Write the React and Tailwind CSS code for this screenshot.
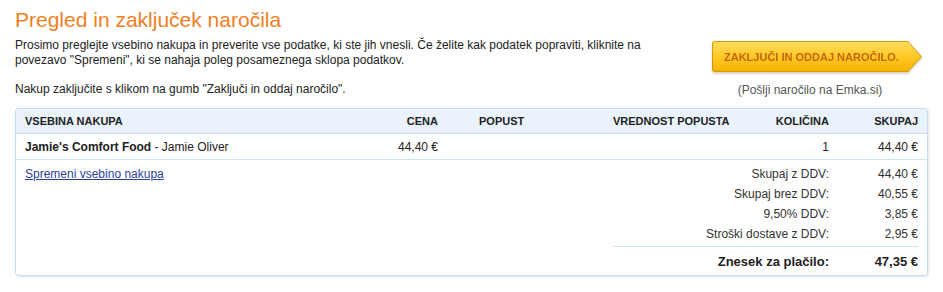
import React from "react";

const font = { fontFamily: '"Liberation Sans", Arial, sans-serif' };

const summary = [
  { label: "Skupaj z DDV:", value: "44,40 €" },
  { label: "Skupaj brez DDV:", value: "40,55 €" },
  { label: "9,50% DDV:", value: "3,85 €" },
  { label: "Stroški dostave z DDV:", value: "2,95 €" },
];

const App = () => {
  return (
    <div
      className="w-[943px] h-[292px] bg-white px-[15px] pt-[6px] text-[12px] text-[#222]"
      style={font}
    >
      <h1 className="text-[21px] leading-[28px] text-[#f07f23]">
        Pregled in zaključek naročila
      </h1>

      <div className="flex justify-between">
        <div className="w-[650px] leading-[15px] pt-[4px]">
          <p>
            Prosimo preglejte vsebino nakupa in preverite vse podatke, ki ste
            jih vnesli. Če želite kak podatek popraviti, kliknite na povezavo
            "Spremeni", ki se nahaja poleg posameznega sklopa podatkov.
          </p>
          <p className="mt-[14px]">
            Nakup zaključite s klikom na gumb "Zaključi in oddaj naročilo".
          </p>
        </div>

        {/* gumb */}
        <div className="flex flex-col items-center w-[212px] mr-[5px] pt-[7px]">
          <button className="relative h-[31px] w-[210px] pl-[12px] pr-[22px] text-left drop-shadow-[0_2px_1px_rgba(120,80,0,0.25)]">
            <span className="absolute inset-0 bg-[#d39a06] [clip-path:polygon(0_0,196px_0,210px_50%,196px_100%,0_100%)] rounded-l-[3px]" />
            <span className="absolute inset-[1px] bg-gradient-to-b from-[#ffdc5a] via-[#ffc923] to-[#f6b300] [clip-path:polygon(0_0,195px_0,208px_50%,195px_100%,0_100%)] rounded-l-[2px]" />
            <span className="relative whitespace-nowrap text-[11px] font-bold text-[#c4650f]">
              ZAKLJUČI IN ODDAJ NAROČILO.
            </span>
          </button>
          <p className="mt-[9px] mr-[14px] text-[#555]">
            (Pošlji naročilo na Emka.si)
          </p>
        </div>
      </div>

      {/* tabela */}
      <div className="mt-[9px] border border-[#c9dcef] rounded-[3px] shadow-[1px_1px_2px_rgba(160,185,210,0.35)]">
        <div className="grid grid-cols-[354px_77px_157px_136px_98px_1fr] h-[25px] items-center bg-[#eaf3fd] border-b border-[#c9dcef] text-[11px] font-bold text-[#222]">
          <div className="pl-[9px]">VSEBINA NAKUPA</div>
          <div className="pr-[9px] text-right">CENA</div>
          <div className="pl-[32px]">POPUST</div>
          <div className="pl-[9px]">VREDNOST POPUSTA</div>
          <div className="pr-[9px] text-right">KOLIČINA</div>
          <div className="pr-[9px] text-right">SKUPAJ</div>
        </div>

        <div className="grid grid-cols-[354px_77px_157px_136px_98px_1fr] h-[26px] items-center border-b border-[#d3e3f3]">
          <div className="pl-[9px]">
            <span className="font-bold">Jamie's Comfort Food</span> - Jamie
            Oliver
          </div>
          <div className="pr-[9px] text-right">44,40 €</div>
          <div />
          <div />
          <div className="pr-[9px] text-right">1</div>
          <div className="pr-[9px] text-right">44,40 €</div>
        </div>

        <div className="pt-[4px]">
          {summary.map((s, i) => (
            <div
              key={i}
              className="grid grid-cols-[1fr_89px] h-[20px] items-center text-[#333]"
            >
              <div className="flex justify-between">
                <div className="pl-[9px]">
                  {i === 0 && (
                    <a href="#" className="text-[#2b3f9c] underline">
                      Spremeni vsebino nakupa
                    </a>
                  )}
                </div>
                <div className="pr-[9px]">{s.label}</div>
              </div>
              <div className="pr-[9px] text-right">{s.value}</div>
            </div>
          ))}

          <div className="ml-[597px] mr-[9px] mt-[2px] border-t border-[#d3e3f3] grid grid-cols-[1fr_80px] h-[29px] pt-[1px] items-center text-[13px] font-bold">
            <div className="pr-[9px] text-right">Znesek za plačilo:</div>
            <div className="text-right">47,35 €</div>
          </div>
        </div>
      </div>
    </div>
  );
};

export default App;
